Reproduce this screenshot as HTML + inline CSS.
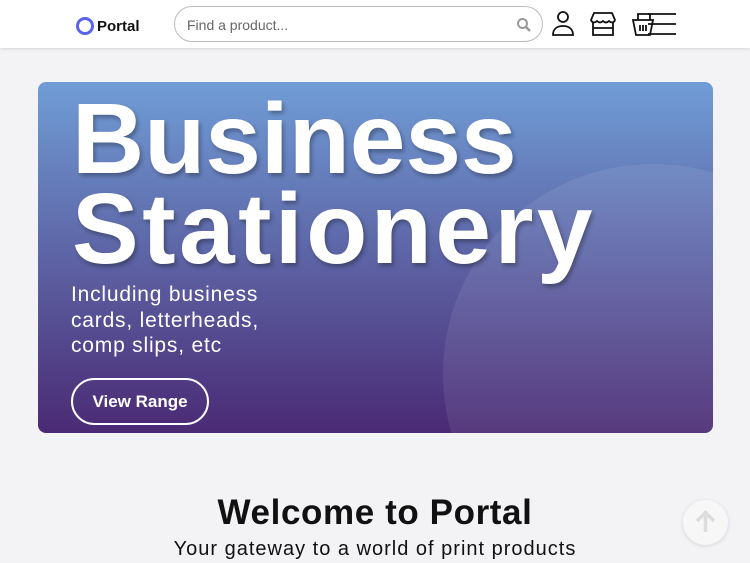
<!DOCTYPE html>
<html><head><style>
*{margin:0;padding:0;box-sizing:border-box}
body{width:750px;height:563px;overflow:hidden;background:#f3f3f6;font-family:"Liberation Sans",sans-serif;position:relative}
.hdr{position:absolute;left:0;top:0;width:750px;height:48px;background:#fff;box-shadow:0 1px 3px rgba(0,0,0,.12)}
.search{position:absolute;left:174px;top:6px;width:369px;height:36px;border:1px solid #bbb;border-radius:18px;background:#fff}
.search span{position:absolute;left:12px;top:10px;font-size:14px;color:#666}
.hero{position:absolute;left:38px;top:82px;width:675px;height:351px;border-radius:8px;overflow:hidden;background:linear-gradient(#709dd6,#4a2a74)}
.circ{position:absolute;left:405px;top:82px;width:420px;height:420px;border-radius:50%;background:rgba(255,255,255,.08)}
.t{position:absolute;left:34px;color:#fff;font-weight:bold;font-size:100px;line-height:1;text-shadow:2px 3px 4px rgba(0,0,0,.3);white-space:nowrap}
.sub{position:absolute;left:33px;top:200px;color:#fff;font-size:21px;line-height:25.5px;letter-spacing:0.8px}
.btn{position:absolute;left:33px;top:296px;width:138px;height:47px;border:2px solid #fff;border-radius:24px;color:#fff;font-weight:bold;font-size:17px;text-align:center;line-height:43px}
h1{position:absolute;left:0;width:750px;top:493px;text-align:center;font-size:35px;color:#111;letter-spacing:0.6px}
.p2{position:absolute;left:0;width:750px;top:538px;text-align:center;font-size:20px;color:#111;letter-spacing:1px}
.up{position:absolute;left:683px;top:500px;width:45px;height:45px;border-radius:50%;background:#f7f7f8;box-shadow:0 1px 4px rgba(0,0,0,.12)}
</style></head><body>
<div class="hdr">
<svg style="position:absolute;left:75px;top:16px" width="20" height="20" viewBox="0 0 20 20"><circle cx="10" cy="10" r="7.5" fill="none" stroke="#5b63e6" stroke-width="3"/></svg>
<div style="position:absolute;left:97px;top:18px;font-size:15px;font-weight:bold;color:#111">Portal</div>
<div class="search"><span>Find a product...</span>
<svg style="position:absolute;right:10px;top:10px" width="16" height="16" viewBox="0 0 16 16"><circle cx="6.5" cy="6.5" r="4.5" fill="none" stroke="#999" stroke-width="2"/><path d="M10 10l4 4" stroke="#999" stroke-width="2.4"/></svg></div>
<svg style="position:absolute;left:550px;top:10px" width="26" height="27" viewBox="0 0 26 27" fill="none" stroke="#111" stroke-width="1.8"><circle cx="13" cy="7" r="5"/><path d="M3 25c0-6 4-9 10-9s10 3 10 9z"/></svg>
<svg style="position:absolute;left:589px;top:11px" width="28" height="26" viewBox="0 0 28 26" fill="none" stroke="#111" stroke-width="1.8"><path d="M5 2h18l3 7c-1 3-4 3-6 1-2 2-4 2-6 0-2 2-4 2-6 0-2 2-5 2-6-1z"/><path d="M4 11v13h20V11M4 17h20"/></svg>
<svg style="position:absolute;left:630px;top:10px" width="48" height="28" viewBox="0 0 48 28" fill="none" stroke="#111" stroke-width="1.8"><path d="M8 10V4h12v6M3 10h20l-3 15H6z"/><path d="M10 15v6M13 15v6M16 15v6"/><path d="M18 4h28M18 14h28M18 24h28"/></svg>
</div>
<div class="hero"><div class="circ"></div>
<div class="t" style="top:7px">Business</div>
<div class="t" style="top:97px;letter-spacing:3.5px">Stationery</div>
<div class="sub">Including business<br>cards, letterheads,<br>comp slips, etc</div>
<div class="btn">View Range</div>
</div>
<h1>Welcome to Portal</h1>
<div class="p2">Your gateway to a world of print products</div>
<div class="up"><svg style="position:absolute;left:11px;top:10px" width="23" height="24" viewBox="0 0 23 24" fill="none" stroke="#ddd" stroke-width="3.5"><path d="M11.5 22V3M3 11l8.5-8.5L20 11"/></svg></div>
</body></html>
